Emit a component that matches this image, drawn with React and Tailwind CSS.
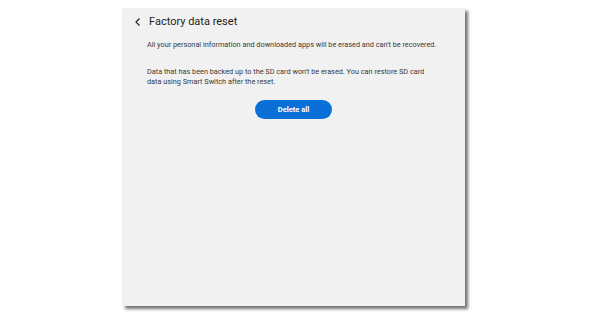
import React from 'react';

const App = () => {
  return (
    <div className="w-[600px] h-[317px] bg-white pt-2 pl-[122px]" style={{ fontFamily: 'Roboto, "Liberation Sans", sans-serif' }}>
      <div className="w-[343px] h-[298px] bg-[#f1f1f1] shadow-[3px_3px_3px_rgba(0,0,0,0.55)]">
        {/* header */}
        <div className="flex items-center h-[27px] pt-[1px] pl-[12px]">
          <svg width="8" height="10" viewBox="0 0 8 10" className="mr-[7px]">
            <path d="M5.5 1.5 L2 5 L5.5 8.5" fill="none" stroke="#222" strokeWidth="1.2" />
          </svg>
          <span className="text-[11px] text-[#1e1e1e]">Factory data reset</span>
        </div>

        <div className="pl-[25px] pr-[20px] text-[7.3px] leading-[10px] text-[#3a3a3a]">
          <p className="mt-[5px]">All your personal information and downloaded apps will be erased and can't be recovered.</p>
          <p className="mt-[17px]">
            Data that has been backed up to the SD card won't be erased. You can restore SD card
            <br />
            data using Smart Switch after the reset.
          </p>
        </div>

        <div className="flex justify-center mt-[13px]">
          <button className="w-[77px] h-[19px] rounded-full bg-[#0b6fd8] text-white text-[7.5px] font-bold">
            Delete all
          </button>
        </div>
      </div>
    </div>
  );
};

export default App;
